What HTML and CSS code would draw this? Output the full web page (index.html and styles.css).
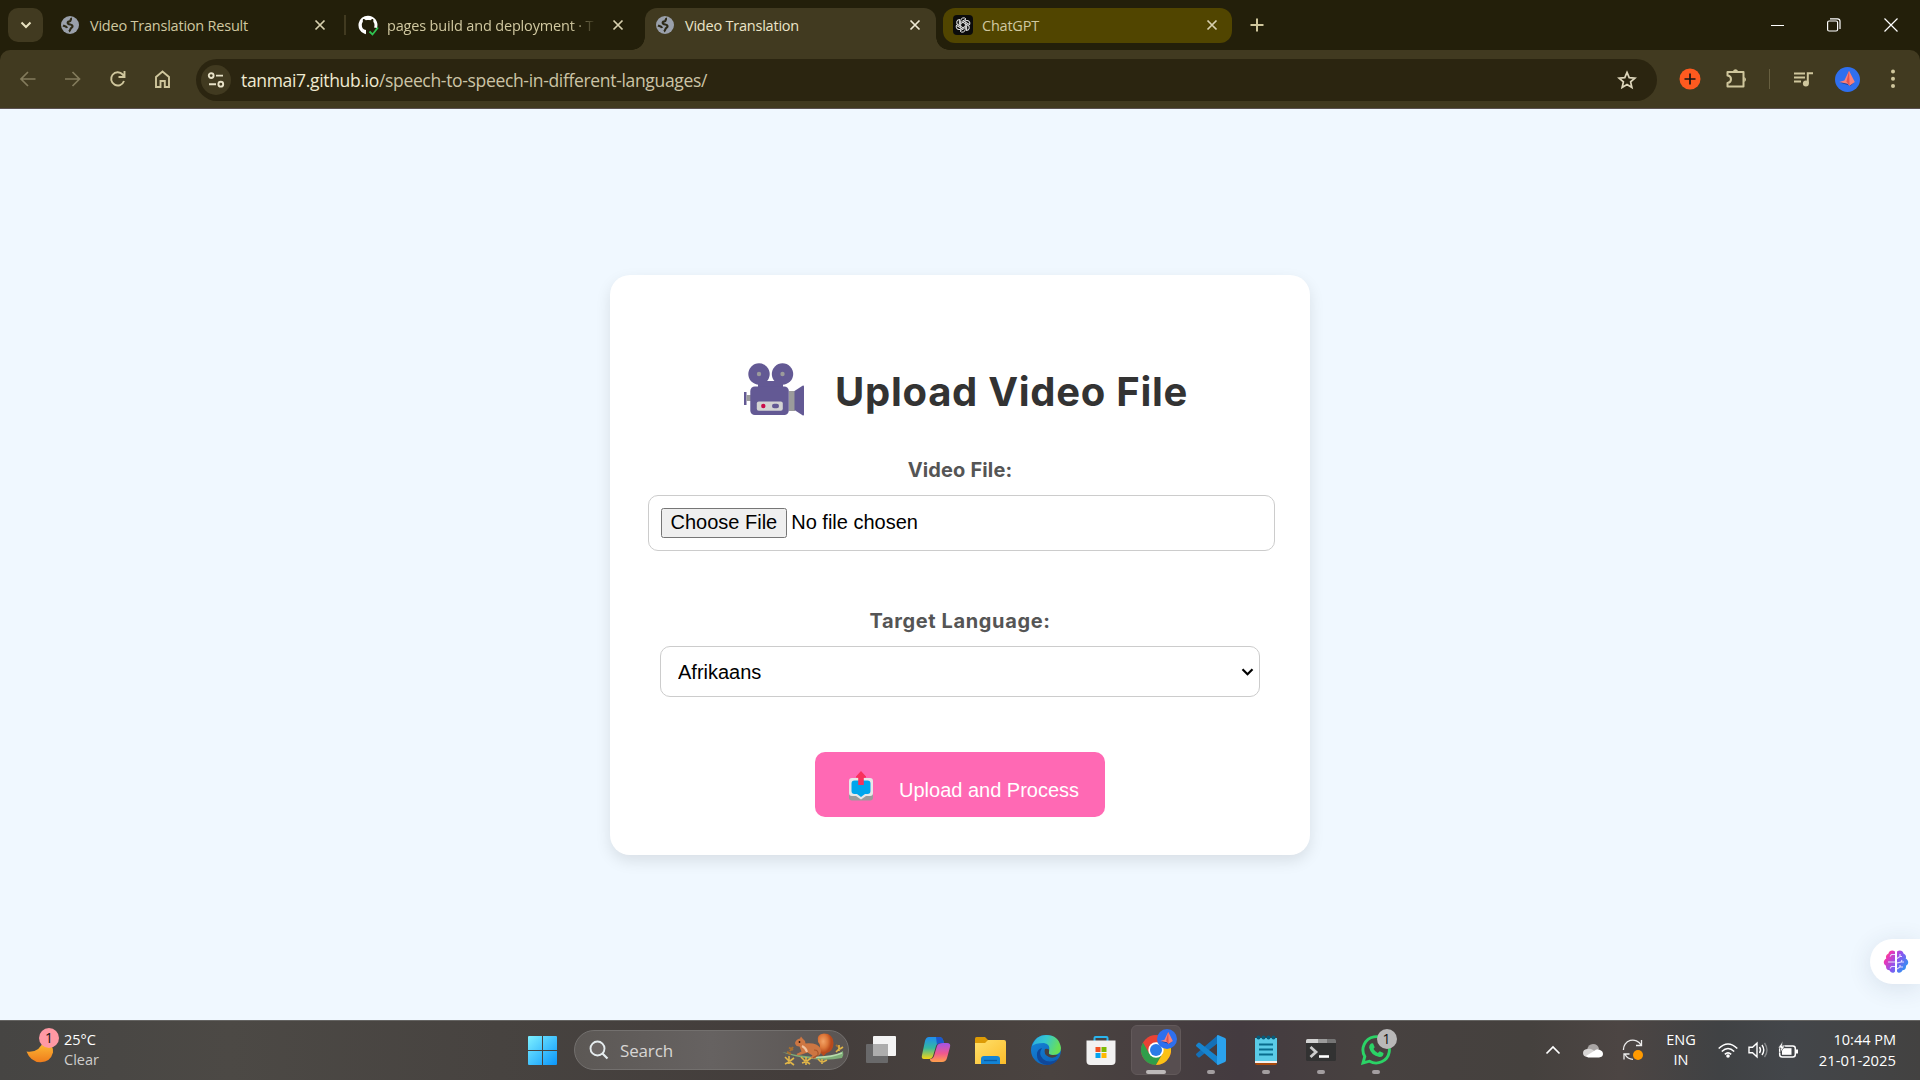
FILE: index.html
```html
<!DOCTYPE html>
<html lang="en">
<head>
<meta charset="utf-8">
<title>Video Translation</title>
<link rel="stylesheet" href="styles.css">
</head>
<body>
<svg width="0" height="0" class="defs" aria-hidden="true">
  <defs>
    <symbol id="globe" viewBox="0 0 18 18"><circle cx="9" cy="9" r="9" fill="#9aa0ab"/><path d="M11 2.500C9 2.500 10.500 5 8.500 5.300 6.500 5.500 6 7 7.500 8c1.500.8 3.500.2 4 2 .4 1.700-1.500 1.500-2 3-.3 1-.8 2-1.500 2.500M2 9.500c1.500.8 3.500.8 4 2.500" fill="none" stroke="#2e2a17" stroke-width="2.200"/></symbol>
    <symbol id="cross" viewBox="0 0 12 12"><path d="M1.500 1.500l9 9m0-9l-9 9" fill="none" stroke="currentColor" stroke-width="1.700"/></symbol>
    <linearGradient id="gw" x2="1" y2="1"><stop stop-color="#7df0ff"/><stop offset="1" stop-color="#0a96fb"/></linearGradient>
    <linearGradient id="moon" x2="0" y2="1"><stop stop-color="#ffc53a"/><stop offset="1" stop-color="#ef7d1c"/></linearGradient>
    <linearGradient id="cpA" x2="0" y2="1"><stop stop-color="#1f8df0"/><stop offset=".5" stop-color="#35b8a0"/><stop offset="1" stop-color="#f5d313"/></linearGradient>
    <linearGradient id="cpB" x2="0" y2="1"><stop stop-color="#a354e8"/><stop offset=".55" stop-color="#f0588e"/><stop offset="1" stop-color="#ffa04a"/></linearGradient>
    <linearGradient id="fold" x2="1" y2="1"><stop stop-color="#ffe06b"/><stop offset="1" stop-color="#fbbc2a"/></linearGradient>
    <linearGradient id="edA" x2="1" y2=".3"><stop stop-color="#2ba9e2"/><stop offset=".5" stop-color="#35c8cf"/><stop offset="1" stop-color="#69df57"/></linearGradient>
    <linearGradient id="edB" x2=".7" y2="1"><stop stop-color="#1788da"/><stop offset="1" stop-color="#0c63bb"/></linearGradient>
    <linearGradient id="brain" x2="1" y2=".6"><stop stop-color="#ff8a3c"/><stop offset=".25" stop-color="#ed35b5"/><stop offset=".6" stop-color="#8a55f0"/><stop offset="1" stop-color="#3490f2"/></linearGradient>
    <radialGradient id="tail" cx=".35" cy=".35"><stop stop-color="#f3a366"/><stop offset=".6" stop-color="#dd7739"/><stop offset="1" stop-color="#b94a1c"/></radialGradient>
    <symbol id="avatar" viewBox="0 0 24 24"><circle cx="12" cy="12" r="12" fill="#2f6fee"/><path d="M5 15l10 3 3-3-6-2z" fill="#193f9e"/><path d="M13.500 3.500L9 13l-5 1.500 8 1.500 2 2 5-3.500z" fill="#f98079"/><path d="M13.500 3.500L14 18l-3-4z" fill="#e5534f"/></symbol>
  </defs>
</svg>
<div class="screen">
  <header class="browser">
    <div class="tabstrip">
      <button class="tab-search" aria-label="Search tabs"><svg width="12" height="8" viewBox="0 0 12 8"><path d="M1.500 1.500L6 6l4.500-4.500" fill="none" stroke="#e8e2c0" stroke-width="2"/></svg></button>
      <div class="tab tab-first"><svg class="favicon" width="18" height="18"><use href="#globe"/></svg><span class="title t-result">Video Translation Result</span><svg class="close" width="12" height="12"><use href="#cross"/></svg></div>
      <i class="tab-sep"></i>
      <div class="tab tab-pages"><svg class="favicon" width="21" height="21" viewBox="0 0 21 21"><path d="M7.500 19.500v-3.200c-2 .4-2.700-.7-3.200-1.800M10 .8a9.300 9.300 0 0 0-3.500 18L8 19v-4c-2.800-.6-4.200-2-4.200-5 0-1.500.4-2.500 1.100-3.300-.2-1-.1-2 .2-2.700 1 0 2 .6 2.800 1.200 1.500-.4 3-.4 4.500 0C13.200 4.600 14.200 4 15 4c.4.800.5 1.800.3 2.700.8.900 1.200 2 1.200 3.300 0 1-.2 1.900-.5 2.500l3 .5A9.300 9.300 0 0 0 10 .8z" fill="#fff"/><path d="M11.500 16.500l3 3 5.500-7" fill="none" stroke="#2fc451" stroke-width="1.800"/></svg><span class="title t-pages">pages build and deployment · T</span><svg class="close" width="12" height="12"><use href="#cross"/></svg></div>
      <div class="tab tab-active"><svg class="favicon" width="18" height="18"><use href="#globe"/></svg><span class="title t-video">Video Translation</span><svg class="close" width="12" height="12"><use href="#cross"/></svg></div>
      <div class="tab tab-gpt"><svg class="favicon" width="20" height="20" viewBox="0 0 20 20"><rect width="20" height="20" rx="4" fill="#0b0b0b"/><g fill="none" stroke="#e9e9e9" stroke-width="1"><g id="petals"><path id="petal" d="M7.700 11.300V5.600a2.900 2.900 0 0 1 5.300-1.500l-4.500 2.600"/><use href="#petal" transform="rotate(60 10 10)"/><use href="#petal" transform="rotate(120 10 10)"/></g><use href="#petals" transform="rotate(180 10 10)"/></g></svg><span class="title t-gpt">ChatGPT</span><svg class="close" width="12" height="12"><use href="#cross"/></svg></div>
      <svg class="new-tab" width="14" height="14" viewBox="0 0 14 14"><path d="M7 .5v13M.5 7h13" stroke="#cfc69c" stroke-width="2"/></svg>
      <div class="win-controls">
        <svg width="14" height="14" viewBox="0 0 14 14"><path d="M1 7.500h13" stroke="#fff"/></svg>
        <svg width="14" height="14" viewBox="0 0 14 14"><g fill="none" stroke="#fff" stroke-width="1.200"><rect x=".6" y="3" width="10" height="10" rx="1.500"/><path d="M3 .8h7.500q2.500 0 2.500 2.500V11"/></g></svg>
        <svg width="14" height="14" viewBox="0 0 14 14"><path d="M.5.500l13 13m0-13l-13 13" stroke="#fff" stroke-width="1.200"/></svg>
      </div>
    </div>
    <div class="toolbar">
      <nav class="nav">
        <svg width="20" height="20" viewBox="0 0 20 20" class="dim"><path d="M17.500 10H3m7-7l-7 7 7 7"/></svg>
        <svg width="20" height="20" viewBox="0 0 20 20" class="dim"><path d="M2 10h14.500m-7-7l7 7-7 7"/></svg>
        <svg width="20" height="20" viewBox="0 0 20 20"><path d="M16 12A6.600 6.600 0 1 1 14.700 5.500L16.500 7.500M16.500 2v6h-6"/></svg>
        <svg width="20" height="20" viewBox="0 0 20 20"><path d="M3 8L9.500 2.500 16 8v10h-4.200v-6H7.500v6H3z"/></svg>
      </nav>
      <div class="omnibox">
        <span class="site-info"><svg width="18" height="16" viewBox="0 0 18 16"><g fill="none" stroke="#e8e2c8" stroke-width="1.900"><circle cx="4.200" cy="3.600" r="2.400"/><path d="M9 3.600h7M2 12.200h7"/><circle cx="13.800" cy="12.200" r="2.400"/></g></svg></span>
        <span class="url"><b>tanmai7.github.io</b>/speech-to-speech-in-different-languages/</span>
        <svg class="star" width="20" height="20" viewBox="0 0 20 20"><path d="M10 2.400l2.200 5.300 5.700.5-4.300 3.700 1.300 5.600-4.900-3-4.900 3 1.300-5.600L2.100 8.200l5.700-.5z" fill="none" stroke="#ddd6bb" stroke-width="1.700"/></svg>
      </div>
      <div class="extensions">
        <svg width="22" height="22" viewBox="0 0 22 22"><circle cx="11" cy="11" r="10.500" fill="#ff5a1f"/><path d="M11 5.500v11M5.500 11h11" stroke="#161616" stroke-width="1.700"/></svg>
        <svg width="22" height="22" viewBox="0 0 22 22"><path d="M2.500 4h16v14.500h-16V15q3.500-.5 3.500-3.700T2.500 7.600z" fill="none" stroke="#cfc69c" stroke-width="2" stroke-linejoin="round"/><path d="M8 3a2.700 2.700 0 0 1 5 0zM19.300 9a2.700 2.700 0 0 1 0 5z" fill="#cfc69c"/></svg>
        <i class="bar-sep"></i>
        <svg width="20" height="18" viewBox="0 0 20 18"><path d="M1 3.500h11M1 7.500h11M1 11.500h7" stroke="#cfc69c" stroke-width="1.900"/><path d="M14.800 13V3.200H20" fill="none" stroke="#cfc69c" stroke-width="2"/><circle cx="12.900" cy="13.400" r="3" fill="#cfc69c"/></svg>
        <svg width="25" height="25"><use href="#avatar"/></svg>
        <svg width="6" height="22" viewBox="0 0 6 22" fill="#cfc69c"><circle cx="3" cy="3.500" r="2"/><circle cx="3" cy="10.700" r="2"/><circle cx="3" cy="18" r="2"/></svg>
      </div>
    </div>
  </header>
  <main class="page">
    <section class="card">
      <h1 class="heading">
        <svg width="62" height="54" viewBox="0 0 62 54"><path d="M0 29h2.500v13H0z" fill="#635994"/><path d="M2.500 32H8v6H2.500zM45 28h6v20h-6z" fill="#9b9b9b"/><path d="M50.500 28l8-5.300q1.500-.6 1.500.8v28q0 1.500-1.500.8l-8-5.300z" fill="#635994"/><circle cx="15" cy="11" r="10.700" fill="#635994"/><circle cx="38.500" cy="11" r="10.700" fill="#635994"/><path d="M14 18h25v8H14z" fill="#635994"/><rect x="6.300" y="23.500" width="38.500" height="28.500" rx="4.500" fill="#635994"/><circle cx="15" cy="11" r="2.200" fill="#9b9b9b"/><circle cx="38.500" cy="11" r="2.200" fill="#9b9b9b"/><rect x="12.800" y="38.500" width="26" height="9.200" rx="2" fill="#d3d3d3"/><circle cx="19.300" cy="43" r="2.200" fill="#ca0b4a"/><rect x="28" y="40.800" width="7" height="4.500" rx="2.200" fill="#635994"/></svg>
        <span>Upload Video File</span>
      </h1>
      <label class="label label-file" for="file">Video File:</label>
      <input class="file" id="file" type="file">
      <label class="label label-lang" for="lang">Target Language:</label>
      <div class="select-box">
        <select class="lang" id="lang"><option>Afrikaans</option></select>
        <svg class="caret" width="13" height="8" viewBox="0 0 13 8"><path d="M1.500 1.300l5 5 5-5" fill="none" stroke="#000" stroke-width="2.200"/></svg>
      </div>
      <button class="submit" type="button">
        <svg width="26" height="30" viewBox="0 0 26 30"><path d="M1 18h24v8.500q0 3-3 3H4q-3 0-3-3z" fill="#9b9b9b"/><path d="M4 7h18q3 0 3 3v12q0 3-3 3h-4l-5 3.500L8 25H4q-3 0-3-3V10q0-3 3-3z" fill="#e8e8e8"/><path d="M6.500 9.500h13q3 0 3 3v7.500q0 3-3 3H17l-4 3-4-3H6.500q-3 0-3-3v-7.500q0-3 3-3z" fill="#00a6ed"/><path d="M13 0l5 5.500q.5 1.200-1 1.200h-1.200V14h-5.600V6.700H9q-1.500 0-1-1.200z" fill="#f8315c"/></svg>
        <span>Upload and Process</span>
      </button>
    </section>
    <div class="assistant"><svg width="26" height="24" viewBox="0 0 26 24"><path d="M12 1.500C9-.5 6 1 5.500 3.500 3 4.500 2.500 7 3.300 8.500 0 10.500 0 14 3 15.800c-.3 3 1.700 4.400 3.500 4.500 1 3 4.500 3 5.500 1.200zM14 1.500c3-2 6-.5 6.500 2 2.500 1 3 3.500 2.200 5 3.300 2 3.300 5.500.3 7.300.3 3-1.700 4.400-3.500 4.500-1 3-4.500 3-5.500 1.200z" fill="url(#brain)"/><path d="M12 4.500H8.500L7 6.500M12 12H5M12 16.500H8.500L7 18.500M14 8.500l3-2V4M17 6.500h2M14 13l4-1 1-2M18 12h3M14 19l3-2v-2M17 17h3" fill="none" stroke="#e5dcff" stroke-width="1.100"/></svg></div>
  </main>
  <footer class="taskbar">
    <div class="weather">
      <span class="weather-icon"><svg width="30" height="30" viewBox="0 0 30 30"><path d="M.5 15.500q13 2 17.500-12Q28 9 27 16.500q-2.500 9.500-12.500 9.800Q4.500 26 .5 15.500z" fill="url(#moon)"/></svg><em class="badge pink">1</em></span>
      <span class="weather-text"><span>25°C</span><small>Clear</small></span>
    </div>
    <svg class="start" width="29" height="29" viewBox="0 0 29 29"><path d="M0 1q0-1 1-1h13v14H0zM15 0h13q1 0 1 1v13H15zM0 15h14v14H1q-1 0-1-1zM15 15h14v13q0 1-1 1H15z" fill="url(#gw)"/></svg>
    <div class="search">
      <svg width="20" height="20" viewBox="0 0 20 20"><circle cx="8.500" cy="8.500" r="7" fill="#6c6765" stroke="#e5ecee" stroke-width="1.900"/><path d="M13.500 13.500l5 5" stroke="#e5ecee" stroke-width="2.200"/></svg>
      <span>Search</span>
      <svg class="squirrel" width="64" height="34" viewBox="0 0 64 34"><path d="M0 19q16 4 32 5 20 1 29-6 1 4-1 7-14 3-30 1-18-2-30-7z" fill="#7fae78"/><path d="M30 24q18 1 30-4" fill="none" stroke="#b9dcae" stroke-width="1.500"/><path d="M36 17q4-4 0-8Q34 1 42 .5q9 0 9.500 9.500 0 8-7 10l-3 3z" fill="url(#tail)"/><path d="M13 10q1-4 5-4.500l1-2 1.500 2q2.500 1.500 3 5 12-1 15 5 2 6-4 8l-1 2h-6l3-3-5-3-6 2-4 1-1-1.500 5-2.500-2-5q-4 0-4.500-3.500z" fill="#cd7642"/><path d="M20 13q4 2 5 6" fill="none" stroke="#f0c3a0" stroke-width="2"/><path d="M32 17q5 0 4 5l-5 3" fill="none" stroke="#a9552a" stroke-width="1.200"/><circle cx="17.500" cy="9" r=".9" fill="#2a1710"/><g fill="none" stroke="#a8702f" stroke-width="2"><path d="M7 14.500l4 2.500m0-3l-3 4M5 19l4 2M54 12l4 3"/></g><g fill="none" stroke="#e0b548" stroke-width="1.600"><path d="M3 24l4 4m0-5v8m5-6l-4 3m-5 3l4-2m1 0l4 3M19 24l4 4m1-4v8m5-7l-4 3m-5 2l3-1m2 0l3 2M36 26l3 3m1-3v5m5-4l-4 2M54 19l4-4m-1-3v6m4-4l-3 2"/></g></svg>
    </div>
    <div class="apps">
      <span class="app"><svg width="30" height="30" viewBox="0 0 30 30"><rect y="9" width="22" height="19" rx="1" fill="#69696a"/><rect x="7" y="1" width="23" height="20" rx="1" fill="#f4f4f4"/><rect x="7" y="9" width="15" height="12" fill="#adadad"/></svg></span>
      <span class="app"><svg width="30" height="30" viewBox="0 0 30 30"><path d="M8 2h10q3 0 4 3l1 3h-4q-3 0-4 3l-3 10q-1 3-4 3H3Q0 24 1 20L4 6q1-4 4-4z" fill="url(#cpA)"/><path d="M22 8h4q4 0 3 4l-3 11q-1 4-5 4H12q-3 0-3-3 3 0 4-3l3-10q1-3 6-3z" fill="url(#cpB)"/><path d="M15 2h4q3 0 4 6h-4q-2 0-3 2z" fill="#1c58ce"/></svg></span>
      <span class="app"><svg width="31" height="30" viewBox="0 0 31 30"><path d="M0 3.500Q0 2 1.500 2H10l3 3v6H0z" fill="#dd9b05"/><path d="M0 8h10l3-3h16q2 0 2 2v22H0z" fill="url(#fold)"/><path d="M6 29v-5q0-3 3-3h13q3 0 3 3v5z" fill="#1384d6"/><path d="M9 25.500h13" stroke="#0b5ba1" stroke-width="1.300"/></svg></span>
      <span class="app"><svg width="30" height="30" viewBox="0 0 30 30"><circle cx="15" cy="15" r="15" fill="url(#edB)"/><path d="M1 11Q5 0 15 0q13 0 15 13 0 7-8 7-5 0-4-3 2-8-5-9Q4 8 1 11z" fill="url(#edA)"/><path d="M11 13q-4 6 1 11 6 5 15 0-4 6-11 6Q5 28 6 18q1-4 5-5z" fill="#10489a"/><path d="M18 17q-1 3 3 3h6q-4 4-9 2-6-3-4-8 5-1 4 3z" fill="#4a403f"/></svg></span>
      <span class="app"><svg width="30" height="30" viewBox="0 0 30 30"><path d="M8.500 7V3q0-1 1-1h11q1 0 1 1v4" fill="none" stroke="#2ab5ee" stroke-width="2"/><path d="M.5 5.500h29V26q0 4-4 4h-21q-4 0-4-4z" fill="#f2f1f1"/><path d="M9.500 12h5v5h-5z" fill="#f15022"/><path d="M15.500 12h5v5h-5z" fill="#7eba02"/><path d="M9.500 18h5v5h-5z" fill="#05a4ef"/><path d="M15.500 18h5v5h-5z" fill="#ffb902"/></svg></span>
      <span class="app current running"><svg width="30" height="30" viewBox="0 0 30 30"><circle cx="15" cy="15" r="15" fill="#e94235"/><path d="M2 7.500A15 15 0 0 0 15 30l6.500-11-13 0z" fill="#2f9e4a"/><path d="M15 30A15 15 0 0 0 28 7.500H15l6.500 11.300z" fill="#fbc116"/><circle cx="15" cy="15" r="7.700" fill="#fff"/><circle cx="15" cy="15" r="6" fill="#2a7be8"/></svg><svg class="profile" width="20" height="20"><use href="#avatar"/></svg></span>
      <span class="app running"><svg width="30" height="30" viewBox="0 0 30 30"><path d="M22 0v8L4 22q-1 1-2 0l-1.500-1.500q-1-1 0-2z" fill="#1470b8"/><path d="M22 30v-8L4 8Q3 7 2 8L.5 9.500q-1 1 0 2z" fill="#1684cf"/><path d="M22 0l7 3q1 .5 1 2v20q0 1.500-1 2l-7 3q-1-.2-1-1V1q0-1 1-1z" fill="#2ba2ed"/></svg></span>
      <span class="app running"><svg width="22" height="30" viewBox="0 0 22 30"><path d="M0 26h22v2q0 2-2 2H2q-2 0-2-2z" fill="#a94a0c"/><path d="M0 3h22v23H0z" fill="#5acbe7"/><path d="M0 26h22v2H0z" fill="#f1f1f1"/><path d="M4 9.500h14M4 14.500h14M4 19.500h14" stroke="#086c8e" stroke-width="1.800"/><g fill="#085c7a"><circle cx="3.500" cy="2.500" r="2"/><circle cx="8.500" cy="2.500" r="2"/><circle cx="13.500" cy="2.500" r="2"/><circle cx="18.500" cy="2.500" r="2"/></g></svg></span>
      <span class="app running"><svg width="30" height="30" viewBox="0 0 30 30"><rect y="4" width="30" height="22" rx="1.500" fill="#323232"/><path d="M0 8V5.500Q0 4 1.500 4H12v4z" fill="#d2d2d2"/><path d="M12 4h9v4h-9z" fill="#9b9b9b"/><path d="M21 4h7.500Q30 4 30 5.500V8h-9z" fill="#757575"/><path d="M4.500 12l5.500 5-5.500 5" fill="none" stroke="#ccc" stroke-width="2.800"/><path d="M13 21.500h10" stroke="#fff" stroke-width="2.600"/></svg></span>
      <span class="app running"><svg width="30" height="30" viewBox="0 0 30 30"><path d="M2 28l1.800-6.500A13.200 13.200 0 1 1 8.500 26.200z" fill="none" stroke="#2bd366" stroke-width="2.900"/><path d="M10 8.500l2-.3 1.700 4-1.200 1.800q1.500 2.700 4.300 4l1.900-1.800 3.800 1.900q0 4.300-4.200 4-8.300-1.500-10.200-9.500 0-2.800 1.900-4.100z" fill="#2bd366"/></svg><em class="badge grey">1</em></span>
    </div>
    <div class="tray">
      <span class="cell"><svg width="16" height="10" viewBox="0 0 16 10"><path d="M1.500 8.500L8 2l6.500 6.500" fill="none" stroke="#fff" stroke-width="1.700"/></svg></span>
      <span class="cell"><svg width="20" height="15" viewBox="0 0 20 15"><path d="M4 7Q5 1 10 1t6 5l-6 3z" fill="#a9a5a4"/><path d="M4 6q3-1 6 1l7 6-13 1q-4-.5-4-4t4-4z" fill="#d7d5d4"/><path d="M3 13l8-5q3-3 6-1 3 1 3 4t-4 3.500H5z" fill="#fff"/></svg></span>
      <span class="cell"><svg width="22" height="22" viewBox="0 0 22 22"><g fill="none" stroke="#ececec" stroke-width="1.300"><path d="M1.500 11A9.300 9.300 0 0 1 19 6M19.500 1v5.500H14M11 20.300a9 9 0 0 1-8-5M2 20.500V15h5.500"/></g><circle cx="16" cy="16" r="5" fill="#ff9a00"/></svg></span>
      <span class="lang-switch"><span>ENG</span><span>IN</span></span>
      <span class="cell small"><svg width="20" height="16" viewBox="0 0 20 16"><g fill="none" stroke="#fff" stroke-width="1.500"><path d="M.7 6.500q9.300-9 18.600 0M3.800 9.500q6.200-6 12.400 0M6.800 12.400q3.200-3 6.400 0"/></g><circle cx="10" cy="14" r="1.800" fill="#fff"/></svg></span>
      <span class="cell small"><svg width="20" height="18" viewBox="0 0 20 18"><g fill="none" stroke="#fff" stroke-width="1.400"><path d="M1 6.300h3.500L9 2.200v13.600L4.500 11.700H1z"/><path d="M11.500 6q2 3 0 6M14 4q3.500 5 0 10"/><path d="M16.500 2q5 7 0 14" stroke="#858789"/></g></svg></span>
      <span class="cell small"><svg width="21" height="18" viewBox="0 0 21 18"><rect x="1.700" y="5" width="15.600" height="11" rx="2.500" fill="none" stroke="#fff" stroke-width="1.500"/><rect x="4" y="7.200" width="9.500" height="6.600" fill="#fff"/><path d="M17.500 8.500h2.500v4h-2.500z" fill="#fff"/><path d="M5 0L0 7h3l-1 5 5-7H4z" fill="#fff" stroke="#414447" stroke-width=".6"/></svg></span>
      <span class="clock"><span class="time">10:44 PM</span><span class="date">21-01-2025</span></span>
    </div>
  </footer>
</div>
</body>
</html>
```
FILE: styles.css
```css
* { box-sizing: border-box; }
body { margin: 0; font-family: "Open Sans", "Noto Sans", sans-serif; }
svg { display: block; flex: none; }
.defs { position: absolute; }
.screen { width: 1920px; height: 1080px; display: flex; flex-direction: column; overflow: hidden; }

/* Browser window */
.browser { height: 109px; background: #231f0a; border-bottom: 1px solid #5a5150; color: #d0c8a0; flex: none; }
.tabstrip { height: 50px; display: flex; align-items: center; padding-left: 8px; }
.tab-search { width: 35px; height: 34px; border: 0; border-radius: 10px; background: #413a20; padding: 0; display: grid; place-items: center; }
.tab { display: flex; align-items: center; flex: none; height: 35px; }
.title { font-size: 14.5px; line-height: 20px; letter-spacing: -.22px; white-space: nowrap; flex: 1; padding-top: 1px; }
.close { color: #d8d0ae; }
.tab-first { width: 301px; padding: 0 18px; }
.tab-first .title { margin-left: 11px; }
.tab-sep { width: 2px; height: 20px; background: #413a20; }
.tab-pages { width: 300px; padding: 0 22px 0 12px; }
.t-pages { margin-left: 8px; margin-right: 17px; letter-spacing: -.17px; -webkit-mask: linear-gradient(90deg, #000 88%, transparent 101%); mask: linear-gradient(90deg, #000 88%, transparent 101%); }
.tab-active { width: 291px; height: 42px; align-self: flex-end; background: #413a20; border-radius: 12px 12px 0 0; padding: 0 15px 8px 11px; color: #ebe5c9; position: relative; margin-left: -1px; }
.tab-active::before, .tab-active::after { content: ""; position: absolute; bottom: 0; width: 13px; height: 13px; }
.tab-active::before { right: 100%; background: radial-gradient(circle at 0 0, transparent 12.5px, #413a20 13px); }
.tab-active::after { left: 100%; background: radial-gradient(circle at 100% 0, transparent 12.5px, #413a20 13px); }
.tab-active .title { margin-left: 11px; }
.tab-active .close { color: #eee9d5; }
.tab-gpt { width: 289px; margin-left: 7px; background: #514500; border-radius: 12px; padding: 0 14px 0 10px; }
.tab-gpt .title { margin-left: 9px; }
.new-tab { margin-left: 18px; }
.win-controls { margin-left: auto; display: flex; gap: 43px; padding-right: 22px; }
.toolbar { height: 58px; background: #413a20; border-radius: 10px 10px 0 0; display: flex; align-items: center; }
.nav { width: 196px; display: flex; gap: 25px; padding-left: 18px; }
.nav svg { fill: none; stroke: #cfc69c; stroke-width: 1.9; }
.nav .dim { stroke: #837b5c; stroke-width: 1.7; }
.omnibox { width: 1461px; height: 42px; margin-top: 1px; border-radius: 21px; background: #2b2510; display: flex; align-items: center; padding: 0 20px 0 5px; }
.site-info { width: 30px; height: 30px; border-radius: 50%; background: #413a20; display: grid; place-items: center; }
.url { margin-left: 10px; flex: 1; font-size: 17.5px; line-height: 24px; letter-spacing: -.33px; color: #cbc4a6; white-space: nowrap; }
.url b { font-weight: 400; color: #f0ead0; }
.extensions { display: flex; align-items: center; padding-left: 22px; }
.extensions svg:nth-child(2) { margin-left: 24px; }
.bar-sep { width: 1px; height: 20px; margin: 0 23px 0 22px; background: #675f40; }
.extensions svg:nth-child(5) { margin-left: 22px; }
.extensions svg:nth-child(6) { margin-left: 30px; }

/* Upload page */
.page { flex: 1; background: #f0f8ff; position: relative; padding-top: 166px; }
.card { width: 700px; height: 580px; margin: 0 auto; background: #fff; border-radius: 20px; box-shadow: 0 6px 15px rgba(0, 0, 0, .1); display: flex; flex-direction: column; align-items: center; padding-top: 84px; }
.heading { margin: 0 0 0 14px; height: 66px; width: 446px; display: flex; color: #333; font: 700 40px/66px Inter, "Open Sans", sans-serif; letter-spacing: .72px; white-space: nowrap; }
.heading svg { margin: 4px 29px 0 0; }
.label { font: 700 20px/30px Inter, "Open Sans", sans-serif; color: #555; }
.label-file { margin-top: 30px; letter-spacing: .15px; }
.file { width: 627px; height: 56px; margin: 10px 0 0 2px; padding: 12px; border: 1px solid #ccc; border-radius: 10px; font: 20px "Liberation Sans", Arial, sans-serif; color: #000; }
.file::file-selector-button { font: 20px "Liberation Sans", Arial, sans-serif; height: 30px; margin-right: 4px; padding: 0 8px 2px; }
.label-lang { margin-top: 55px; letter-spacing: .62px; }
.select-box { position: relative; margin-top: 10px; }
.lang { display: block; appearance: none; width: 600px; height: 51px; padding: 0 0 0 17px; border: 1px solid #ccc; border-radius: 10px; background-color: #fff; color: #000; font: 20px "Liberation Sans", Arial, sans-serif; }
.caret { position: absolute; right: 6px; top: 22px; pointer-events: none; }
.submit { width: 290px; height: 65px; margin-top: 55px; border: 0; border-radius: 10px; background: #ff69b4; color: #fff; padding: 11px 0 0 33px; font: 20px/34px "Liberation Sans", Arial, sans-serif; display: flex; align-items: center; }
.submit svg { margin: -8px 25px 0 0; }
.assistant { position: absolute; right: 0; top: 830px; width: 50px; height: 45px; border-radius: 23px 0 0 23px; background: #fff; box-shadow: 0 4px 24px rgba(40, 60, 90, .12); padding: 11px 0 0 13px; }

/* Taskbar */
.taskbar { height: 60px; flex: none; display: flex; align-items: center; padding-bottom: 1px; border-top: 1px solid #656462; color: #fff; background: linear-gradient(90deg, #464543 0, #4c4945 230px, #474340 500px, #433d3b 800px, #4a4340 1050px, #443b40 1240px, #474140 1360px, #45413e 1530px, #4c4543 1620px, #404244 1720px, #43464a 1790px, #434241 1920px); }
.weather { width: 528px; display: flex; padding-left: 26px; }
.weather-icon { width: 38px; position: relative; padding-top: 5px; }
.badge { position: absolute; width: 20px; height: 20px; border-radius: 50%; color: #111; font: 400 14px/20px "Open Sans", sans-serif; text-align: center; }
.pink { left: 13px; top: -3px; background: #ff99a4; }
.weather-text { display: flex; flex-direction: column; font-size: 14.5px; line-height: 20px; margin-top: -1px; }
.weather-text small { font-size: 14.5px; color: #cfcecd; }
.search { width: 275px; height: 40px; margin-left: 17px; border: 1px solid #73706e; border-radius: 20px; background: linear-gradient(90deg, #5c5855, #666261 50%, #5a5553); display: flex; align-items: center; padding-left: 14px; font-size: 17px; letter-spacing: -.15px; color: #d8d6d4; }
.search span { margin-left: 11px; }
.squirrel { margin-left: auto; margin-right: 2px; }
.apps { display: flex; margin-left: 6.5px; }
.app { width: 50px; height: 50px; margin-right: 5px; position: relative; display: grid; place-items: center; border-radius: 6px; }
.current { background: #574e50; border: 1px solid #62595a; }
.running::after { content: ""; position: absolute; left: 21px; bottom: 1px; width: 8px; height: 4px; border-radius: 2px; background: #a39ea0; }
.current.running::after { left: 14px; bottom: 0; width: 20px; background: #bdb9b9; }
.profile { position: absolute; left: 25px; top: 3px; }
.grey { left: 26px; top: 4px; background: #b9b8b8; }
.tray { margin-left: auto; display: flex; align-items: center; padding-right: 24px; font-size: 14.5px; line-height: 20px; }
.cell { width: 40px; display: grid; place-items: center; }
.cell.small { width: 30px; }
.lang-switch { width: 56px; margin-right: 4px; display: flex; flex-direction: column; align-items: center; }
.clock { width: 93px; display: flex; flex-direction: column; align-items: flex-end; }
.date { font-size: 14.8px; }
```
